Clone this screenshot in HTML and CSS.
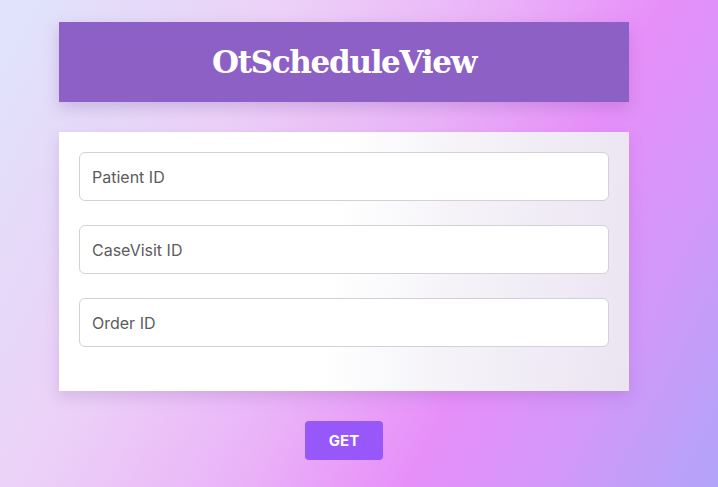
FILE: index.html
```html
<!DOCTYPE html>
<html>
<head>
<meta charset="utf-8">
<link rel="stylesheet" href="styles.css">
</head>
<body>
<div class="page">
  <header class="banner"><h1 class="title">OtScheduleView</h1></header>
  <form class="card">
    <input class="field" type="text" placeholder="Patient ID">
    <input class="field" type="text" placeholder="CaseVisit ID">
    <input class="field" type="text" placeholder="Order ID">
  </form>
  <div class="actions"><button class="btn" type="button">GET</button></div>
</div>
</body>
</html>
```
FILE: styles.css
```css
html, body { margin: 0; padding: 0; height: 100%; }
body {
  background: linear-gradient(118deg, #dfe4fb 0%, #ecd0f7 30%, #eab4f8 50%, #e78ff9 68%, #d397fa 82%, #b1a4f8 100%);
  font-family: Inter, "Noto Sans", sans-serif;
}
.page {
  width: 570px;
  margin-left: 59px;
  padding-top: 22px;
}
.banner {
  background: #8d60c6;
  height: 80px;
  display: flex;
  align-items: center;
  justify-content: center;
  box-shadow: 0 6px 14px rgba(120, 80, 160, 0.25);
}
.title {
  margin: 0;
  color: #fff;
  font-family: "DejaVu Serif", serif;
  font-weight: bold;
  font-size: 31px;
  letter-spacing: -1.3px;
}
.card {
  margin-top: 30px;
  background: linear-gradient(95deg, #ffffff 0%, #ffffff 48%, #f5f3f8 68%, #ebe4f2 100%);
  padding: 20px 20px 44px;
  display: flex;
  flex-direction: column;
  gap: 24px;
  box-shadow: 0 6px 14px rgba(120, 80, 160, 0.2);
}
.field {
  display: block;
  box-sizing: border-box;
  width: 100%;
  height: 49px;
  border: 1px solid #d4d0d8;
  border-radius: 6px;
  background: #fff;
  padding: 0 12px;
  font-family: Inter, sans-serif;
  font-size: 16px;
  color: #333;
  outline: none;
}
.field::placeholder { color: #5c5c5c; }
.actions {
  display: flex;
  justify-content: center;
  margin-top: 30px;
}
.btn {
  width: 78px;
  height: 39px;
  border: none;
  border-radius: 4px;
  background: #9857f9;
  color: #fff;
  font-family: Inter, sans-serif;
  font-weight: 700;
  font-size: 15px;
}
```
